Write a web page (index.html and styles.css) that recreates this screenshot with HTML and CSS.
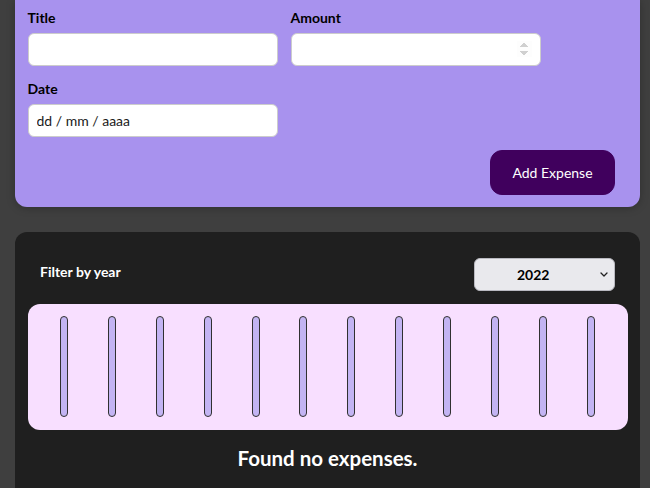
FILE: index.html
```html
<!DOCTYPE html>
<html lang="en">
<head>
<meta charset="utf-8">
<title>Expenses</title>
<link rel="stylesheet" href="styles.css">
</head>
<body>
<div class="new-expense">
  <form class="expense-form">
    <div class="controls">
      <div class="control">
        <label>Title</label>
        <input type="text">
      </div>
      <div class="control">
        <label>Amount</label>
        <input type="number" min="0.01" step="0.01">
      </div>
      <div class="control">
        <label>Date</label>
        <input type="text" value="dd / mm / aaaa">
      </div>
    </div>
    <div class="actions">
      <button type="button" class="add-btn">Add Expense</button>
    </div>
  </form>
</div>

<div class="expenses">
  <div class="filter">
    <div class="filter-control">
      <label>Filter by year</label>
      <div class="select-wrap">
        <select class="year-select">
          <option>2022</option>
          <option>2021</option>
          <option>2020</option>
          <option>2019</option>
        </select>
        <svg class="select-arrow" width="8" height="5" viewBox="0 0 8 5"><path d="M1 1 L4 4 L7 1" fill="none" stroke="#222" stroke-width="1.3" stroke-linecap="round" stroke-linejoin="round"/></svg>
      </div>
    </div>
  </div>
  <div class="chart">
    <div class="chart-bar"><div class="bar-inner"></div></div>
    <div class="chart-bar"><div class="bar-inner"></div></div>
    <div class="chart-bar"><div class="bar-inner"></div></div>
    <div class="chart-bar"><div class="bar-inner"></div></div>
    <div class="chart-bar"><div class="bar-inner"></div></div>
    <div class="chart-bar"><div class="bar-inner"></div></div>
    <div class="chart-bar"><div class="bar-inner"></div></div>
    <div class="chart-bar"><div class="bar-inner"></div></div>
    <div class="chart-bar"><div class="bar-inner"></div></div>
    <div class="chart-bar"><div class="bar-inner"></div></div>
    <div class="chart-bar"><div class="bar-inner"></div></div>
    <div class="chart-bar"><div class="bar-inner"></div></div>
  </div>
  <h2 class="fallback">Found no expenses.</h2>
</div>
</body>
</html>
```

FILE: styles.css
```css
* {
  box-sizing: border-box;
}

html, body {
  margin: 0;
  padding: 0;
}

body {
  background-color: #3f3f3f;
  font-family: "Lato", "Liberation Sans", sans-serif;
  font-size: 14px;
  overflow: hidden;
}

.new-expense {
  background-color: #a892ee;
  margin: 0 10px 25px 15px;
  padding: 8px 12.5px 12.5px;
  border-radius: 0 0 12px 12px;
  box-shadow: 0 1px 8px rgba(0, 0, 0, 0.25);
}

.controls {
  display: flex;
  flex-wrap: wrap;
  gap: 13px;
  margin-bottom: 12.5px;
  text-align: left;
}

.control label {
  display: block;
  font-weight: bold;
  line-height: 19px;
  margin-bottom: 6px;
  color: #000;
}

.control input {
  font: inherit;
  display: block;
  width: 250px;
  height: 33px;
  padding: 0 8px;
  border-radius: 6px;
  border: 1px solid #ccc;
  background: #fff;
  color: #1a1a1a;
}

.control input[type="number"]::-webkit-inner-spin-button {
  opacity: 0.4;
}

.actions {
  display: flex;
  justify-content: flex-end;
}

.add-btn {
  font: inherit;
  width: 125px;
  height: 45px;
  margin-right: 12.5px;
  border: 1px solid #40005d;
  background-color: #40005d;
  color: #fff;
  border-radius: 12px;
  cursor: pointer;
}

.expenses {
  background-color: #1f1f1f;
  margin: 0 10px 0 15px;
  padding: 12.5px 12.5px 20px;
  border-radius: 12px;
}

.filter {
  color: #fff;
  padding: 0 12.5px;
}

.filter-control {
  display: flex;
  align-items: center;
  justify-content: space-between;
  margin: 13px 0 13px;
}

.filter-control label {
  font-weight: bold;
  margin-bottom: 6px;
}

.select-wrap {
  position: relative;
  width: 141px;
  height: 33px;
}

.year-select {
  font: inherit;
  font-weight: bold;
  appearance: none;
  -webkit-appearance: none;
  width: 141px;
  height: 33px;
  padding: 0 12px 0 42px;
  border-radius: 6px;
  border: 1px solid #b9b9c0;
  background-color: #e9e9ed;
  color: #000;
}

.select-arrow {
  position: absolute;
  right: 7px;
  top: 14px;
  pointer-events: none;
}

.chart {
  display: flex;
  justify-content: space-around;
  height: 126px;
  padding: 12.5px;
  border-radius: 12px;
  background-color: #f8dfff;
}

.chart-bar {
  height: 100%;
  width: 8px;
  display: flex;
  flex-direction: column;
  align-items: center;
}

.bar-inner {
  height: 100%;
  width: 100%;
  border: 1px solid #313131;
  border-radius: 12px;
  background-color: #c3b4f3;
}

.fallback {
  color: #fff;
  text-align: center;
  font-size: 20.5px;
  font-weight: bold;
  margin: 16px 0;
}
```
